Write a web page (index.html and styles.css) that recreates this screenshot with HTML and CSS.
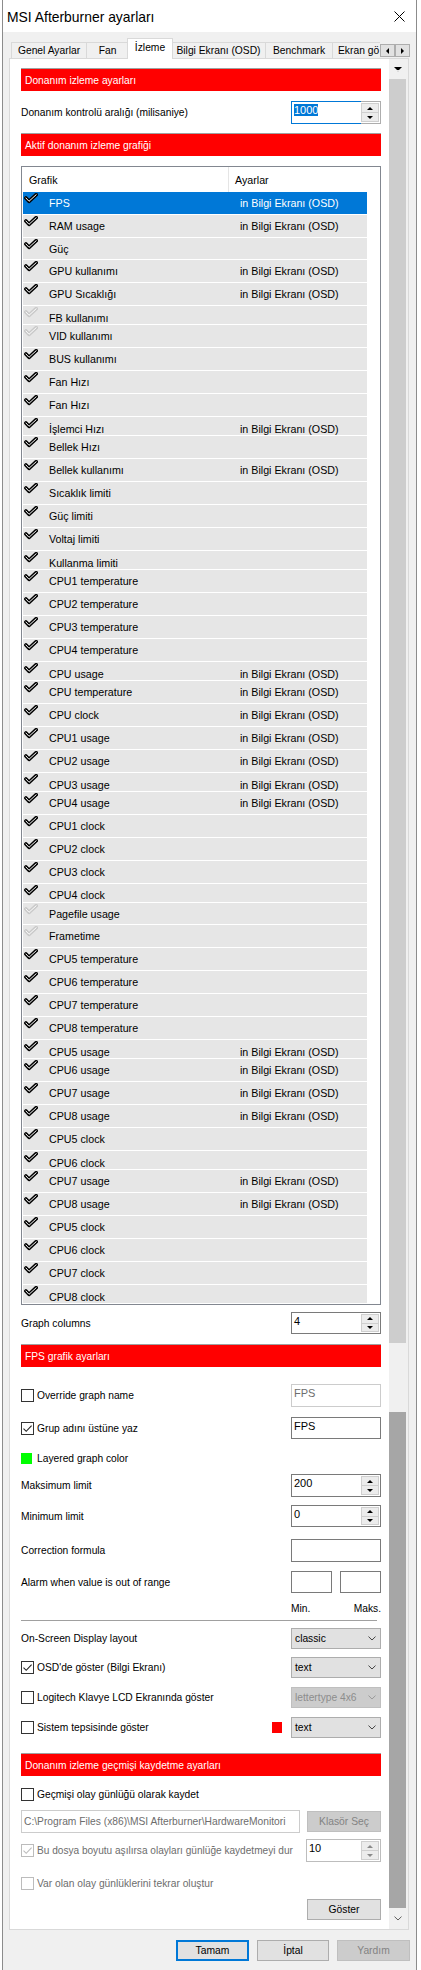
FILE: index.html
```html
<!DOCTYPE html>
<html lang="tr">
<head>
<meta charset="utf-8">
<title>MSI Afterburner ayarları</title>
<link rel="stylesheet" href="styles.css">
</head>
<body>
<svg class="defs" width="0" height="0" aria-hidden="true">
  <defs>
    <symbol id="ck" viewBox="0 0 14 11">
      <path d="M1.9 5.0 L5 8.3 L12.2 1.7" fill="none" stroke="#000" stroke-width="3.6" stroke-linecap="round" stroke-linejoin="round"/>
      <path d="M1.9 5.0 L5 8.3 L12.2 1.7" fill="none" stroke="#fff" stroke-width="1" stroke-linecap="round" stroke-linejoin="round"/>
    </symbol>
    <symbol id="ckl" viewBox="0 0 14 11">
      <path d="M1.9 5.0 L5 8.3 L12.2 1.7" fill="none" stroke="#c9c9c9" stroke-width="3.6" stroke-linecap="round" stroke-linejoin="round"/>
      <path d="M1.9 5.0 L5 8.3 L12.2 1.7" fill="none" stroke="#fff" stroke-width="1" stroke-linecap="round" stroke-linejoin="round"/>
    </symbol>
    <symbol id="tick" viewBox="0 0 11 11">
      <path d="M1.5 5.6 L4.2 8.3 L9.6 2.6" fill="none" stroke="currentColor" stroke-width="1.1"/>
    </symbol>
    <symbol id="chev" viewBox="0 0 8 5">
      <path d="M0.5 0.6 L4 4 L7.5 0.6" fill="none" stroke="currentColor" stroke-width="1"/>
    </symbol>
  </defs>
</svg>
<div class="window">
  <div class="titlebar">
    <span class="title">MSI Afterburner ayarları</span>
    <svg class="close" viewBox="0 0 11 11"><path d="M0.5 0.5 L10.5 10.5 M10.5 0.5 L0.5 10.5" stroke="#000" stroke-width="1"/></svg>
  </div>
  <div class="tabbar">
    <div class="tabs">
      <div class="tab t1">Genel Ayarlar</div>
      <div class="tab t2">Fan</div>
      <div class="tab active">İzleme</div>
      <div class="tab t4">Bilgi Ekranı (OSD)</div>
      <div class="tab t5">Benchmark</div>
      <div class="tab t6">Ekran gö</div>
    </div>
    <div class="tabarrows">
      <span class="ab"><i class="tri-l"></i></span>
      <span class="ab"><i class="tri-r"></i></span>
    </div>
  </div>
  <div class="panel">
    <div class="content">
      <div class="hdr g9">Donanım izleme ayarları</div>
      <div class="frow g10">
        <span>Donanım kontrolü aralığı (milisaniye)</span>
        <div class="spin focus"><span class="val"><span class="selv">1000</span></span><span class="btns"><span><i class="up"></i></span><span><i class="dn"></i></span></span></div>
      </div>
      <div class="hdr g9">Aktif donanım izleme grafiği</div>
      <div class="list g10">
        <div class="lhead"><span class="lh1">Grafik</span><span class="lh2">Ayarlar</span></div>
        <div class="rows">
          <div class="row sel"><svg class="ck"><use href="#ck"/></svg><span>FPS</span><span>in Bilgi Ekranı (OSD)</span></div>
          <div class="row"><svg class="ck"><use href="#ck"/></svg><span>RAM usage</span><span>in Bilgi Ekranı (OSD)</span></div>
          <div class="row m"><svg class="ck"><use href="#ck"/></svg><span>Güç</span><span></span></div>
          <div class="row"><svg class="ck"><use href="#ck"/></svg><span>GPU kullanımı</span><span>in Bilgi Ekranı (OSD)</span></div>
          <div class="row"><svg class="ck"><use href="#ck"/></svg><span>GPU Sıcaklığı</span><span>in Bilgi Ekranı (OSD)</span></div>
          <div class="row s"><svg class="ck"><use href="#ckl"/></svg><span>FB kullanımı</span><span></span></div>
          <div class="row"><svg class="ck"><use href="#ckl"/></svg><span>VID kullanımı</span><span></span></div>
          <div class="row"><svg class="ck"><use href="#ck"/></svg><span>BUS kullanımı</span><span></span></div>
          <div class="row"><svg class="ck"><use href="#ck"/></svg><span>Fan Hızı</span><span></span></div>
          <div class="row"><svg class="ck"><use href="#ck"/></svg><span>Fan Hızı</span><span></span></div>
          <div class="row s"><svg class="ck"><use href="#ck"/></svg><span>İşlemci Hızı</span><span>in Bilgi Ekranı (OSD)</span></div>
          <div class="row"><svg class="ck"><use href="#ck"/></svg><span>Bellek Hızı</span><span></span></div>
          <div class="row"><svg class="ck"><use href="#ck"/></svg><span>Bellek kullanımı</span><span>in Bilgi Ekranı (OSD)</span></div>
          <div class="row"><svg class="ck"><use href="#ck"/></svg><span>Sıcaklık limiti</span><span></span></div>
          <div class="row"><svg class="ck"><use href="#ck"/></svg><span>Güç limiti</span><span></span></div>
          <div class="row"><svg class="ck"><use href="#ck"/></svg><span>Voltaj limiti</span><span></span></div>
          <div class="row s"><svg class="ck"><use href="#ck"/></svg><span>Kullanma limiti</span><span></span></div>
          <div class="row"><svg class="ck"><use href="#ck"/></svg><span>CPU1 temperature</span><span></span></div>
          <div class="row"><svg class="ck"><use href="#ck"/></svg><span>CPU2 temperature</span><span></span></div>
          <div class="row"><svg class="ck"><use href="#ck"/></svg><span>CPU3 temperature</span><span></span></div>
          <div class="row"><svg class="ck"><use href="#ck"/></svg><span>CPU4 temperature</span><span></span></div>
          <div class="row s"><svg class="ck"><use href="#ck"/></svg><span>CPU usage</span><span>in Bilgi Ekranı (OSD)</span></div>
          <div class="row"><svg class="ck"><use href="#ck"/></svg><span>CPU temperature</span><span>in Bilgi Ekranı (OSD)</span></div>
          <div class="row"><svg class="ck"><use href="#ck"/></svg><span>CPU clock</span><span>in Bilgi Ekranı (OSD)</span></div>
          <div class="row"><svg class="ck"><use href="#ck"/></svg><span>CPU1 usage</span><span>in Bilgi Ekranı (OSD)</span></div>
          <div class="row"><svg class="ck"><use href="#ck"/></svg><span>CPU2 usage</span><span>in Bilgi Ekranı (OSD)</span></div>
          <div class="row s"><svg class="ck"><use href="#ck"/></svg><span>CPU3 usage</span><span>in Bilgi Ekranı (OSD)</span></div>
          <div class="row"><svg class="ck"><use href="#ck"/></svg><span>CPU4 usage</span><span>in Bilgi Ekranı (OSD)</span></div>
          <div class="row"><svg class="ck"><use href="#ck"/></svg><span>CPU1 clock</span><span></span></div>
          <div class="row"><svg class="ck"><use href="#ck"/></svg><span>CPU2 clock</span><span></span></div>
          <div class="row"><svg class="ck"><use href="#ck"/></svg><span>CPU3 clock</span><span></span></div>
          <div class="row s hi"><svg class="ck"><use href="#ck"/></svg><span>CPU4 clock</span><span></span></div>
          <div class="row m"><svg class="ck"><use href="#ckl"/></svg><span>Pagefile usage</span><span></span></div>
          <div class="row"><svg class="ck"><use href="#ckl"/></svg><span>Frametime</span><span></span></div>
          <div class="row"><svg class="ck"><use href="#ck"/></svg><span>CPU5 temperature</span><span></span></div>
          <div class="row"><svg class="ck"><use href="#ck"/></svg><span>CPU6 temperature</span><span></span></div>
          <div class="row"><svg class="ck"><use href="#ck"/></svg><span>CPU7 temperature</span><span></span></div>
          <div class="row"><svg class="ck"><use href="#ck"/></svg><span>CPU8 temperature</span><span></span></div>
          <div class="row s"><svg class="ck"><use href="#ck"/></svg><span>CPU5 usage</span><span>in Bilgi Ekranı (OSD)</span></div>
          <div class="row"><svg class="ck"><use href="#ck"/></svg><span>CPU6 usage</span><span>in Bilgi Ekranı (OSD)</span></div>
          <div class="row"><svg class="ck"><use href="#ck"/></svg><span>CPU7 usage</span><span>in Bilgi Ekranı (OSD)</span></div>
          <div class="row"><svg class="ck"><use href="#ck"/></svg><span>CPU8 usage</span><span>in Bilgi Ekranı (OSD)</span></div>
          <div class="row"><svg class="ck"><use href="#ck"/></svg><span>CPU5 clock</span><span></span></div>
          <div class="row s"><svg class="ck"><use href="#ck"/></svg><span>CPU6 clock</span><span></span></div>
          <div class="row"><svg class="ck"><use href="#ck"/></svg><span>CPU7 usage</span><span>in Bilgi Ekranı (OSD)</span></div>
          <div class="row"><svg class="ck"><use href="#ck"/></svg><span>CPU8 usage</span><span>in Bilgi Ekranı (OSD)</span></div>
          <div class="row"><svg class="ck"><use href="#ck"/></svg><span>CPU5 clock</span><span></span></div>
          <div class="row"><svg class="ck"><use href="#ck"/></svg><span>CPU6 clock</span><span></span></div>
          <div class="row"><svg class="ck"><use href="#ck"/></svg><span>CPU7 clock</span><span></span></div>
          <div class="row s"><svg class="ck"><use href="#ck"/></svg><span>CPU8 clock</span><span></span></div>
        </div>
      </div>
      <div class="frow h22 g7">
        <span>Graph columns</span>
        <div class="spin"><span class="val">4</span><span class="btns"><span><i class="up"></i></span><span><i class="dn"></i></span></span></div>
      </div>
      <div class="hdr g10">FPS grafik ayarları</div>
      <div class="frow g17">
        <span class="cb"></span><span class="cbl">Override graph name</span>
        <span class="edit dis">FPS</span>
      </div>
      <div class="frow h22 g10">
        <span class="cb"><svg><use href="#tick"/></svg></span><span class="cbl">Grup adını üstüne yaz</span>
        <span class="edit">FPS</span>
      </div>
      <div class="frow g8">
        <span class="swatch green"></span><span class="swl">Layered graph color</span>
      </div>
      <div class="frow g4">
        <span>Maksimum limit</span>
        <div class="spin"><span class="val">200</span><span class="btns"><span><i class="up"></i></span><span><i class="dn"></i></span></span></div>
      </div>
      <div class="frow h22 g8">
        <span>Minimum limit</span>
        <div class="spin"><span class="val">0</span><span class="btns"><span><i class="up"></i></span><span><i class="dn"></i></span></span></div>
      </div>
      <div class="frow g12">
        <span>Correction formula</span>
        <span class="edit"></span>
      </div>
      <div class="frow h22 g9">
        <span>Alarm when value is out of range</span>
        <span class="edit small"></span><span class="edit small"></span>
      </div>
      <div class="mm g9"><span>Min.</span><span>Maks.</span></div>
      <div class="sep g4"></div>
      <div class="frow h21 g7">
        <span>On-Screen Display layout</span>
        <span class="combo"><span>classic</span><svg class="chev"><use href="#chev"/></svg></span>
      </div>
      <div class="frow h21 g8">
        <span class="cb"><svg><use href="#tick"/></svg></span><span class="cbl">OSD'de göster (Bilgi Ekranı)</span>
        <span class="combo"><span>text</span><svg class="chev"><use href="#chev"/></svg></span>
      </div>
      <div class="frow h21 g9">
        <span class="cb"></span><span class="cbl">Logitech Klavye LCD Ekranında göster</span>
        <span class="combo dis"><span>lettertype 4x6</span><svg class="chev"><use href="#chev"/></svg></span>
      </div>
      <div class="frow h21 g9">
        <span class="cb"></span><span class="cbl">Sistem tepsisinde göster</span>
        <span class="swatch red"></span>
        <span class="combo"><span>text</span><svg class="chev"><use href="#chev"/></svg></span>
      </div>
      <div class="hdr g15">Donanım izleme geçmişi kaydetme ayarları</div>
      <div class="frow g7">
        <span class="cb"></span><span class="cbl">Geçmişi olay günlüğü olarak kaydet</span>
      </div>
      <div class="frow g4">
        <span class="edit path">C:\Program Files (x86)\MSI Afterburner\HardwareMonitori</span>
        <span class="btn dis">Klasör Seç</span>
      </div>
      <div class="frow g6">
        <span class="cb dis"><svg><use href="#tick"/></svg></span><span class="cbl dis long">Bu dosya boyutu aşılırsa olayları günlüğe kaydetmeyi dur</span>
        <div class="spin dis narrow"><span class="val">10</span><span class="btns"><span><i class="up"></i></span><span><i class="dn"></i></span></span></div>
      </div>
      <div class="frow g10">
        <span class="cb dis"></span><span class="cbl dis">Var olan olay günlüklerini tekrar oluştur</span>
      </div>
      <div class="frow h21 g4">
        <span class="btn">Göster</span>
      </div>
    </div>
    <div class="vscroll">
      <div class="sb-arrow top"><svg class="sbchev up"><use href="#chev"/></svg></div>
      <div class="sb-thumb a"></div>
      <div class="sb-gap"></div>
      <div class="sb-thumb b"></div>
      <div class="sb-arrow bottom"><svg class="sbchev"><use href="#chev"/></svg></div>
    </div>
  </div>
  <div class="dlgbtns">
    <span class="btn def w73">Tamam</span>
    <span class="btn w72">İptal</span>
    <span class="btn dis w73">Yardım</span>
  </div>
</div>
</body>
</html>
```
FILE: styles.css
```css
* { box-sizing: border-box; }
html, body { margin: 0; padding: 0; }
body {
  width: 421px;
  background: #fff;
  font-family: "Liberation Sans", Arial, sans-serif;
  color: #000;
}
.defs { display: block; width: 0; height: 0; overflow: hidden; }

.window {
  margin-left: 2px;
  width: 415px;
  min-height: 1970px;
  background: #f0f0f0;
  border-left: 1px solid #8c8c8c;
  border-right: 1px solid #8c8c8c;
}

.titlebar {
  height: 32px;
  background: #fff;
  display: flex;
  align-items: center;
  padding-left: 4px;
}
.title { font-size: 13.9px; padding-top: 2px; }
.close { margin-left: auto; margin-right: 11px; width: 11px; height: 11px; }

/* tabs */
.tabbar {
  height: 26px;
  display: flex;
  align-items: flex-end;
  padding-left: 8px;
}
.tabs {
  width: 369px;
  height: 27px;
  margin-bottom: -1px;
  display: flex;
  align-items: flex-end;
  overflow: hidden;
  position: relative;
  z-index: 1;
  flex-shrink: 0;
}
.tab {
  flex-shrink: 0;
  height: 16px;
  margin-bottom: 1px;
  margin-right: -1px;
  border: 1px solid #d9d9d9;
  border-bottom: none;
  background: #f0f0f0;
  font-size: 10.3px;
  line-height: 15px;
  text-align: center;
  white-space: nowrap;
}
.t1 { width: 76px; }
.t2 { width: 43px; }
.tab.active {
  width: 46px;
  height: 21px;
  margin: 0 -2px 0 -1px;
  background: #fff;
  position: relative;
  z-index: 2;
  line-height: 18px;
}
.t4 { width: 95px; }
.t5 { width: 68px; }
.t6 { width: 56px; text-align: left; padding-left: 5px; }

.tabarrows {
  display: flex;
  align-self: flex-start;
  margin-top: 12px;
}
.ab {
  width: 15px;
  height: 13px;
  border: 1px solid #adadad;
  background: #e1e1e1;
  display: flex;
  align-items: center;
  justify-content: center;
}
.tri-l { width: 0; height: 0; border-top: 3px solid transparent; border-bottom: 3px solid transparent; border-right: 3px solid #000; }
.tri-r { width: 0; height: 0; border-top: 3px solid transparent; border-bottom: 3px solid transparent; border-left: 3px solid #000; }

/* panel */
.panel {
  margin-left: 6px;
  width: 400px;
  border: 1px solid #d9d9d9;
  background: #fff;
  display: flex;
}
.content {
  width: 379px;
  flex-shrink: 0;
  padding: 0 8px 9px 11px;
  font-size: 10.25px;
}

.g4 { margin-top: 4px; }
.g6 { margin-top: 6px; }
.g7 { margin-top: 7px; }
.g8 { margin-top: 8px; }
.g9 { margin-top: 9px; }
.g10 { margin-top: 10px; }
.g12 { margin-top: 12px; }
.g15 { margin-top: 15px; }
.g17 { margin-top: 17px; }

.hdr {
  height: 23px;
  background: #ff0000;
  border-top: 1px solid #a0a0a0;
  color: #fff;
  padding-left: 4px;
  display: flex;
  align-items: center;
  white-space: nowrap;
}

/* list */
.list {
  border: 1px solid #828790;
  background: #fff;
}
.lhead {
  height: 25px;
  display: flex;
  font-size: 10.7px;
}
.lh1 {
  width: 207px;
  padding-left: 7px;
  border-right: 1px solid #e5e5e5;
  display: flex;
  align-items: center;
}
.lh2 { padding-left: 6px; display: flex; align-items: center; }
.rows { margin-left: 1px; width: 344px; }
.row {
  height: 23px;
  border-bottom: 1px solid #fff;
  background: #e6e6e6;
  display: grid;
  grid-template-columns: 26px 191px 1fr;
  font-size: 10.7px;
  line-height: 13px;
  overflow: hidden;
  white-space: nowrap;
}
.row span { padding-top: 5px; }
.row.m { height: 22px; }
.row.s { height: 19px; }
.row.s span { padding-top: 5.5px; }
.row.s.hi span { padding-top: 5px; }
.row.sel { background: #0078d7; color: #fff; }
.ck { width: 14px; height: 11px; margin: 1px 0 0 1px; }

/* form rows */
.frow {
  height: 23px;
  display: flex;
  align-items: center;
  white-space: nowrap;
}
.frow.h22 { height: 22px; }
.frow.h21 { height: 21px; }

.spin {
  margin-left: auto;
  width: 90px;
  height: 100%;
  display: flex;
  flex-shrink: 0;
}
.spin.narrow { width: 75px; }
.spin .val {
  flex: 1;
  border: 1px solid #7a7a7a;
  border-right: none;
  background: #fff;
  font-size: 11px;
  line-height: 13px;
  padding: 2px 0 0 2px;
}
.spin .btns {
  width: 20px;
  border: 1px solid #7a7a7a;
  border-left: none;
  background: #fff;
  padding: 1px 1px 1px 0;
  display: flex;
  flex-direction: column;
}
.spin .btns > span {
  flex: 1;
  border: 1px solid #cfcfcf;
  background: #ececec;
  display: flex;
  align-items: center;
  justify-content: center;
}
.spin .btns > span + span { border-top: none; }
.spin.focus .val { border-color: #0078d7; }
.spin.focus .btns { border-color: #adadad; }
.spin.dis .val, .spin.dis .btns { border-color: #bdbdbd; }
.selv { background: #0078d7; color: #fff; }
.up { width: 0; height: 0; border-left: 3px solid transparent; border-right: 3px solid transparent; border-bottom: 3px solid #000; }
.dn { width: 0; height: 0; border-left: 3px solid transparent; border-right: 3px solid transparent; border-top: 3px solid #000; }
.spin.dis .up { border-bottom-color: #8a8a8a; }
.spin.dis .dn { border-top-color: #8a8a8a; }

.edit {
  margin-left: auto;
  width: 90px;
  height: 100%;
  border: 1px solid #7a7a7a;
  background: #fff;
  font-size: 11px;
  line-height: 13px;
  padding: 2px 0 0 2px;
  flex-shrink: 0;
}
.edit.dis { border-color: #cccccc; color: #6d6d6d; }
.edit.small { width: 41px; }
.edit.small + .edit.small { margin-left: 8px; }
.edit.path {
  margin-left: 0;
  width: 279px;
  border-color: #cccccc;
  color: #6d6d6d;
  font-size: 10.25px;
  padding: 4px 0 0 2px;
  overflow: hidden;
}

.cb {
  width: 13px;
  height: 13px;
  border: 1px solid #333;
  background: #fff;
  flex-shrink: 0;
  color: #222;
  display: flex;
}
.cb svg { width: 11px; height: 11px; }
.cb.dis { border-color: #bcbcbc; color: #bcbcbc; }
.cbl { margin-left: 3px; }
.cbl.dis { color: #6d6d6d; }
.cbl.long { font-size: 10.1px; }

.swatch { flex-shrink: 0; }
.swatch.green { width: 11px; height: 11px; background: #00ff00; }
.swl { margin-left: 5px; }
.swatch.red { width: 10px; height: 11px; background: #ff0000; margin-left: auto; margin-right: 9px; }
.swatch.red + .combo { margin-left: 0; }

.mm {
  height: 14px;
  line-height: 14px;
  padding-left: 270px;
  display: flex;
  justify-content: space-between;
}
.sep { height: 1px; width: 356px; background: #a0a0a0; }

.combo {
  margin-left: auto;
  width: 90px;
  height: 100%;
  border: 1px solid #adadad;
  background: #e1e1e1;
  display: flex;
  align-items: center;
  justify-content: space-between;
  padding: 0 4px 0 3px;
  color: #000;
  flex-shrink: 0;
}
.combo.dis { background: #cccccc; border-color: #bfbfbf; color: #8d8d8d; }
.chev { width: 8px; height: 5px; color: #444; }
.combo.dis .chev { color: #9a9a9a; }

.btn {
  margin-left: auto;
  width: 74px;
  height: 21px;
  border: 1px solid #adadad;
  background: #e1e1e1;
  display: flex;
  align-items: center;
  justify-content: center;
  font-size: 10.3px;
  flex-shrink: 0;
}
.btn.dis { background: #cccccc; border-color: #bfbfbf; color: #838383; }

/* scrollbar */
.vscroll {
  width: 19px;
  display: flex;
  flex-direction: column;
  background: #f0f0f0;
}
.sb-arrow {
  height: 20px;
  display: flex;
  align-items: center;
  justify-content: center;
  padding-right: 2px;
}
.sb-arrow.bottom { height: 21px; }
.sbchev { width: 8px; height: 5px; color: #606060; }
.sbchev.up { transform: rotate(180deg); }
.sb-thumb { margin-right: 2px; }
.sb-thumb.a { height: 1264px; background: #cdcdcd; }
.sb-gap { height: 69px; }
.sb-thumb.b { flex: 1; background: #a6a6a6; }

/* dialog buttons */
.dlgbtns {
  display: flex;
  justify-content: flex-end;
  gap: 8px;
  padding: 10px 6px 0 0;
}
.dlgbtns .btn { margin-left: 0; }
.w73 { width: 73px; }
.w72 { width: 72px; }
.btn.def { border: 2px solid #0078d7; }
```
